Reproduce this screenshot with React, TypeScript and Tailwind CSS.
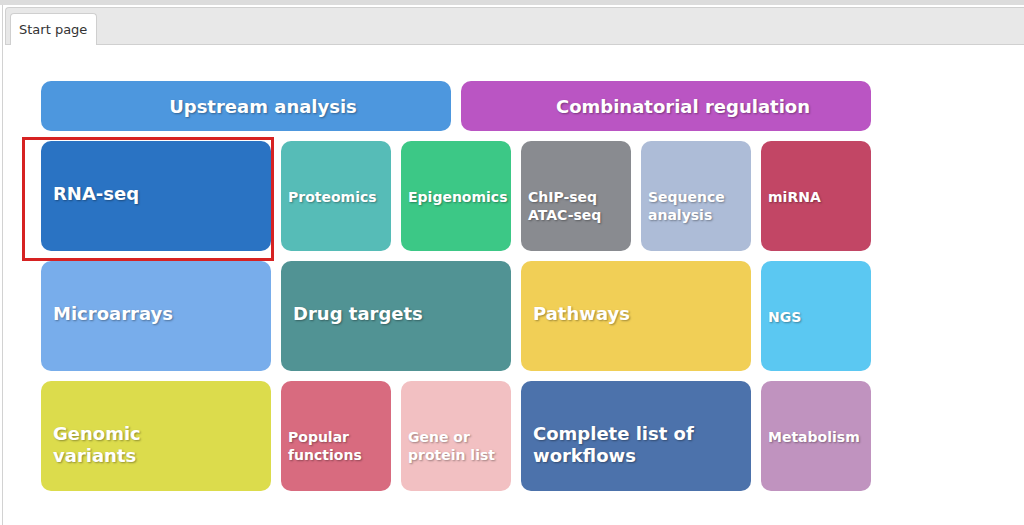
import React from "react";

type Tile = { label: string[]; bg: string; wide?: boolean };

const rows: Tile[][] = [
  [
    { label: ["RNA-seq"], bg: "bg-[#2a73c3]", wide: true },
    { label: ["Proteomics"], bg: "bg-[#56bcb7]" },
    { label: ["Epigenomics"], bg: "bg-[#3cc886]" },
    { label: ["ChIP-seq", "ATAC-seq"], bg: "bg-[#898b90]" },
    { label: ["Sequence", "analysis"], bg: "bg-[#adbcd7]" },
    { label: ["miRNA"], bg: "bg-[#c24665]" },
  ],
  [
    { label: ["Microarrays"], bg: "bg-[#78adeb]", wide: true },
    { label: ["Drug targets"], bg: "bg-[#519394]", wide: true },
    { label: ["Pathways"], bg: "bg-[#f1cf56]", wide: true },
    { label: ["NGS"], bg: "bg-[#5bc8f2]" },
  ],
  [
    { label: ["Genomic", "variants"], bg: "bg-[#dcdc4c]", wide: true },
    { label: ["Popular", "functions"], bg: "bg-[#d86b7f]" },
    { label: ["Gene or", "protein list"], bg: "bg-[#f2c0c2]" },
    { label: ["Complete list of", "workflows"], bg: "bg-[#4c72ab]", wide: true },
    { label: ["Metabolism"], bg: "bg-[#c093bf]" },
  ],
];

function TileBox({ t }: { t: Tile }) {
  return (
    <div
      className={`${t.bg} ${
        t.wide
          ? "col-span-2 pl-[12px] pt-[42px] text-[18px] leading-[22px]"
          : "pl-[7px] pt-[47px] text-[14px] leading-[18px]"
      } h-[110px] rounded-[10px] font-bold text-white [text-shadow:1px_1px_2px_rgba(0,0,0,0.35)]`}
    >
      {t.label.map((l, i) => (
        <div key={i} className="whitespace-nowrap">
          {l}
        </div>
      ))}
    </div>
  );
}

export default function App() {
  return (
    <div className="h-[525px] w-[1024px] overflow-hidden bg-white font-['DejaVu_Sans',Verdana,sans-serif]">
      <div className="h-[5px] bg-[#dcdcdc]" />
      <div className="ml-[2px] h-[520px] border-l border-[#d2d2d2] pl-[2px] pt-[2px]">
        <div className="flex h-[38px] items-end rounded-tl-[4px] border-l border-t border-b border-[#d0d0d0] bg-[#e8e8e8] pl-[4px]">
          <div className="-mb-px flex h-[32px] w-[87px] items-center rounded-t-[4px] border border-b-0 border-[#cfcfcf] bg-white pl-[8px] text-[13px] text-[#333]">
            Start page
          </div>
        </div>

        <div className="pl-[36px] pt-[36px]">
          <div className="flex gap-[10px]">
            <div className="flex h-[50px] w-[410px] items-center justify-center rounded-[10px] bg-[#4d97de] pl-[34px] text-[18px] font-bold text-white [text-shadow:1px_1px_2px_rgba(0,0,0,0.35)]">
              Upstream analysis
            </div>
            <div className="flex h-[50px] w-[410px] items-center justify-center rounded-[10px] bg-[#ba55c3] pl-[34px] text-[18px] font-bold text-white [text-shadow:1px_1px_2px_rgba(0,0,0,0.35)]">
              Combinatorial regulation
            </div>
          </div>

          <div className="relative mt-[10px] grid w-[830px] grid-cols-[repeat(7,110px)] gap-[10px]">
            {rows.map((r, ri) =>
              r.map((t, ti) => <TileBox key={`${ri}-${ti}`} t={t} />)
            )}
            <div className="pointer-events-none absolute left-[-19px] top-[-4px] h-[124px] w-[252px] border-[3px] border-[#d62222]" />
          </div>
        </div>
      </div>
    </div>
  );
}
